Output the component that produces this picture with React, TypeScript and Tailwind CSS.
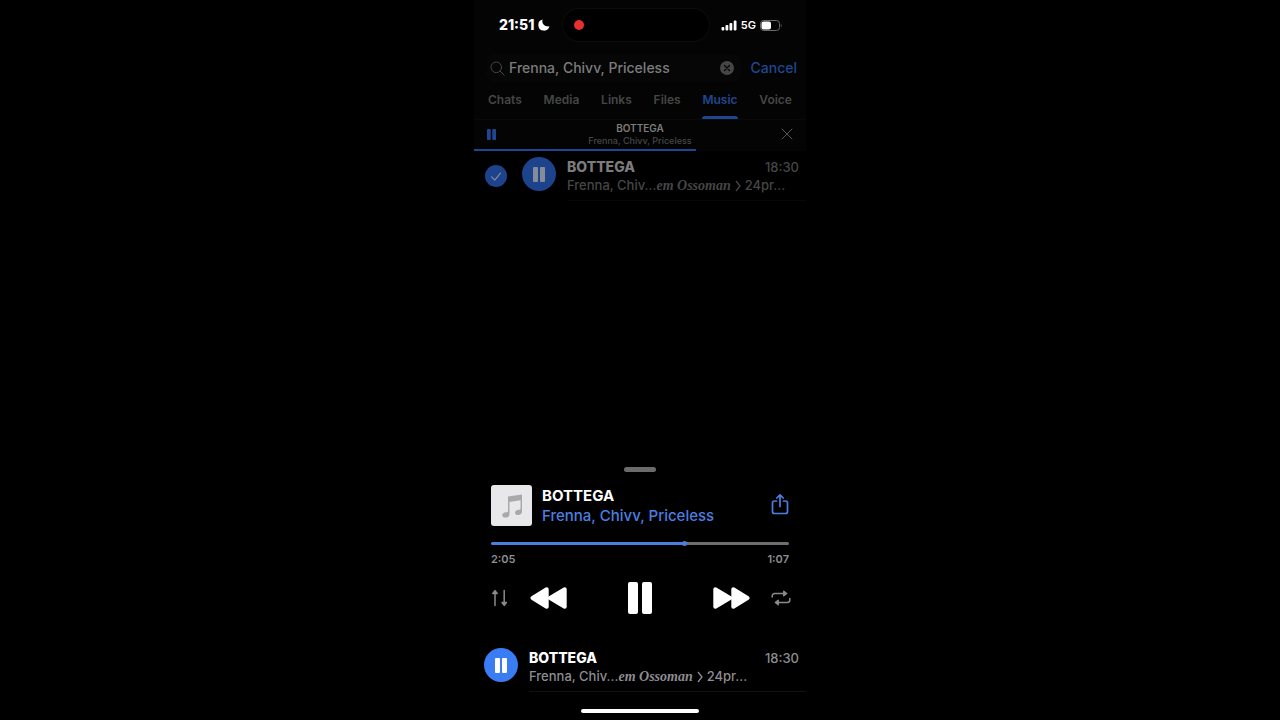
import React, { useState } from 'react';

const TABS = ['Chats', 'Media', 'Links', 'Files', 'Music', 'Voice'];

const TRACK = {
  title: 'BOTTEGA',
  artist: 'Frenna, Chivv, Priceless',
  time: '18:30',
};

const DURATION = 192;

function formatTime(seconds: number) {
  return `${Math.floor(seconds / 60)}:${String(seconds % 60).padStart(2, '0')}`;
}

function PauseIcon({ className }: { className?: string }) {
  return (
    <svg viewBox="0 0 24 32" preserveAspectRatio="none" className={className} fill="currentColor" aria-hidden="true">
      <rect x="0" y="0" width="10" height="32" rx="2" />
      <rect x="14" y="0" width="10" height="32" rx="2" />
    </svg>
  );
}

function SkipIcon({ className }: { className?: string }) {
  return (
    <svg viewBox="0 0 37 22" className={className} fill="currentColor" stroke="currentColor" strokeWidth="4" strokeLinejoin="round" aria-hidden="true">
      <path d="M2.300 2.300v17.400L17 11z" />
      <path d="M20.300 2.300v17.400L34.500 11z" />
    </svg>
  );
}

function TrackText({ dimmed }: { dimmed?: boolean }) {
  return (
    <div className={`min-w-0 flex-1 border-b pt-[7px] pr-[7px] pb-[6px] ${dimmed ? 'border-[#070707]' : 'border-[#111111]'}`}>
      <div className="flex items-center justify-between">
        <span className={`text-[14px] leading-[18px] font-extrabold ${dimmed ? 'text-[#7c7c7c]' : 'text-white'}`}>{TRACK.title}</span>
        <span className={`text-[13px] leading-[18px] font-medium ${dimmed ? 'text-[#464646]' : 'text-[#8d8d92]'}`}>{TRACK.time}</span>
      </div>
      <p className={`text-[13px] leading-[18px] font-medium whitespace-nowrap ${dimmed ? 'text-[#464646]' : 'text-[#8d8d92]'}`}>
        Frenna, Chiv...
        <span className="font-['Liberation_Serif',serif] text-[14px] leading-none font-bold italic">em Ossoman</span>
        <svg viewBox="0 0 6 12" className="mx-1 inline h-[12px] w-[6px] align-[-2px]" fill="none" stroke="currentColor" strokeWidth="1.300" aria-hidden="true">
          <path d="M1 1l4 5-4 5" />
        </svg>
        24pr...
      </p>
    </div>
  );
}

export default function App() {
  const [query, setQuery] = useState(TRACK.artist);
  const [tab, setTab] = useState('Music');
  const [position, setPosition] = useState(125);
  const percent = (position / DURATION) * 100;

  return (
    <div className="min-h-screen bg-black font-['Inter',sans-serif]">
      <main className="mx-auto flex min-h-screen w-full max-w-[332px] flex-col bg-black">
        <div className="bg-[#040404]">
          <header className="flex items-center justify-between pt-[9px] pr-6 pl-[25px] text-white">
            <div className="flex items-center gap-1">
              <span className="text-[14px] leading-[18px] font-extrabold">21:51</span>
              <svg viewBox="0 0 12 12" className="size-3" fill="currentColor" aria-hidden="true">
                <path d="M4.600.6C3.500 4 6 8 11.400 7.300A5.600 5.600 0 1 1 4.600.6z" />
              </svg>
            </div>
            <div className="flex h-8 w-[146px] items-center rounded-full bg-black pl-[11px] ring-1 ring-[#0d0d0d]">
              <span className="size-[10px] rounded-full bg-[#e8302f]" />
            </div>
            <div className="flex items-center gap-1">
              <svg viewBox="0 0 16 11" className="h-[11px] w-4" fill="currentColor" aria-hidden="true">
                <rect x="0.500" y="7" width="2.800" height="3.500" rx="1" />
                <rect x="4.500" y="5" width="2.800" height="5.500" rx="1" />
                <rect x="8.500" y="3" width="2.800" height="7.500" rx="1" />
                <rect x="12.700" y="0.500" width="2.800" height="10" rx="1" />
              </svg>
              <span className="text-[11px] leading-[18px] font-semibold">5G</span>
              <svg viewBox="0 0 22 11" className="h-[11px] w-[22px]" aria-hidden="true">
                <rect x="0.500" y="0.500" width="19" height="10" rx="3" fill="none" stroke="#6a6a6a" />
                <rect x="1.500" y="1.500" width="9.500" height="8" rx="2" fill="white" />
                <path d="M20.800 3.700v3.600c1-.4 1-3.200 0-3.600z" fill="#6a6a6a" />
              </svg>
            </div>
          </header>

          <form className="mt-[13px] flex items-center gap-[10px] pr-[9px] pl-3" onSubmit={(e) => e.preventDefault()}>
            <div className="flex h-7 min-w-0 flex-1 items-center gap-1 rounded-lg bg-[#060606] pr-[7px] pl-1">
              <svg viewBox="0 0 15 15" className="size-[15px] shrink-0 text-[#464646]" fill="none" stroke="currentColor" strokeLinecap="round" aria-hidden="true">
                <circle cx="6.300" cy="6.300" r="5.300" />
                <path d="M10.200 10.200l4 4" />
              </svg>
              <input
                aria-label="Search"
                value={query}
                onChange={(e) => setQuery(e.target.value)}
                className="min-w-0 flex-1 bg-transparent text-[14px] leading-[18px] font-medium text-[#7c7c7c] outline-none"
              />
              <button type="button" aria-label="Clear search" onClick={() => setQuery('')}>
                <svg viewBox="0 0 14 14" className="size-[14px]" aria-hidden="true">
                  <circle cx="7" cy="7" r="7" fill="#464646" />
                  <path d="M4.500 4.500l5 5M9.500 4.500l-5 5" stroke="#060606" strokeWidth="1.400" strokeLinecap="round" />
                </svg>
              </button>
            </div>
            <button type="button" className="text-[14px] leading-[18px] font-medium text-[#1f4791]">Cancel</button>
          </form>

          <nav className="mt-1 flex justify-between border-b border-[#0a0a0a] px-[14px]">
            {TABS.map((name) => (
              <button
                key={name}
                onClick={() => setTab(name)}
                className={`flex flex-col items-center justify-between pt-[5px] text-[12px] leading-[18px] font-semibold ${
                  tab === name ? 'text-[#1f4791]' : 'text-[#464646]'
                }`}
              >
                {name}
                <span className={`mt-[7px] h-[3px] w-full rounded-t-sm ${tab === name ? 'bg-[#1f4791]' : ''}`} />
              </button>
            ))}
          </nav>

          <section className="grid h-[29px] grid-cols-[20px_1fr_20px] items-center px-3 pb-[1px]">
            <button aria-label="Pause" className="pl-[1px] text-[#1f4791]">
              <PauseIcon className="h-[11px] w-[9px]" />
            </button>
            <div className="text-center">
              <p className="text-[10px] leading-[13px] font-semibold text-[#7c7c7c]">{TRACK.title}</p>
              <p className="text-[9px] leading-[11px] font-medium text-[#464646]">{TRACK.artist}</p>
            </div>
            <button aria-label="Close player" className="justify-self-end pr-[1px] text-[#565656]">
              <svg viewBox="0 0 12 12" className="size-3" fill="none" stroke="currentColor" strokeLinecap="round" aria-hidden="true">
                <path d="M1 1l10 10M11 1L1 11" />
              </svg>
            </button>
          </section>
          <div className="h-[2px]">
            <div className="h-full w-[67%] bg-[#1f4791]" />
          </div>
        </div>

        <section className="flex pl-[11px]">
          <label className="relative mt-[14px] mr-[15px] flex size-[22px] items-center justify-center">
            <input type="checkbox" defaultChecked aria-label="Select BOTTEGA" className="size-[22px] appearance-none rounded-full bg-[#1c438c]" />
            <svg viewBox="0 0 22 22" className="pointer-events-none absolute inset-0" fill="none" stroke="#858c99" strokeWidth="1.200" strokeLinecap="round" strokeLinejoin="round" aria-hidden="true">
              <path d="M6.700 11.800l3 3.300 5.800-7" />
            </svg>
          </label>
          <button aria-label="Pause BOTTEGA" className="mt-[6px] mr-[11px] flex size-[34px] items-center justify-center rounded-full bg-[#1c438c] text-[#858c99]">
            <PauseIcon className="h-[15px] w-[12px]" />
          </button>
          <TrackText dimmed />
        </section>

        <section className="mt-auto pt-4">
          <div className="mx-auto h-[5px] w-8 rounded-full bg-[#6b6b6b]" />

          <div className="mt-[13px] flex items-center px-[17px]">
            <div className="flex size-[41px] shrink-0 items-center justify-center rounded-[3px] bg-[#e8e7ea]">
              <svg viewBox="0 0 20 24" className="h-6 w-5" fill="#a9a9ab" aria-hidden="true">
                <path d="M6 2.600L20 .5v17.300c0 2-1.600 3.200-3.800 3.200-1.900 0-3.200-.9-3.200-2.300 0-1.600 1.500-2.700 3.600-2.900 1.300-.1 1.900-.4 1.900-1.300V6.300L7.500 8v12.200c0 2.100-1.600 3.400-4 3.400-1.900 0-3.200-.9-3.200-2.400 0-1.600 1.400-2.700 3.700-2.900 1.400-.1 2-.4 2-1.300z" />
              </svg>
            </div>
            <div className="ml-[10px] flex-1">
              <h1 className="text-[15px] leading-5 font-bold text-white">{TRACK.title}</h1>
              <p className="text-[15px] leading-5 font-medium text-[#4a7fe0]">{TRACK.artist}</p>
            </div>
            <button aria-label="Share" className="pb-1 text-[#4a7fe0]">
              <svg viewBox="0 0 18 22" className="h-[22px] w-[18px]" fill="none" stroke="currentColor" strokeWidth="1.700" strokeLinecap="round" strokeLinejoin="round" aria-hidden="true">
                <path d="M5.500 8H3.500A2 2 0 0 0 1.500 10v8.500a2 2 0 0 0 2 2h11a2 2 0 0 0 2-2V10a2 2 0 0 0-2-2h-2M9 13.500V2M5.800 5L9 1.800 12.200 5" />
              </svg>
            </button>
          </div>

          <div className="mt-4 px-[17px]">
            <input
              type="range"
              aria-label="Position"
              min={0}
              max={DURATION}
              value={position}
              onChange={(e) => setPosition(Number(e.target.value))}
              style={{ background: `linear-gradient(to right, #4a7fe0 ${percent}%, #6e6e6e ${percent}%)` }}
              className="block h-[3px] w-full appearance-none rounded-full [&::-webkit-slider-thumb]:size-[5px] [&::-webkit-slider-thumb]:appearance-none [&::-webkit-slider-thumb]:rounded-full [&::-webkit-slider-thumb]:bg-[#4a7fe0]"
            />
            <div className="mt-[7px] flex justify-between text-[11px] leading-[15px] font-semibold text-[#8d8d92]">
              <span>{formatTime(position)}</span>
              <span>{formatTime(DURATION - position)}</span>
            </div>
          </div>

          <div className="mt-[15px] flex items-center justify-between pr-[15px] pl-[17px]">
            <div className="flex items-center gap-[21px]">
              <button aria-label="Order" className="text-[#8a8a8e]">
                <svg viewBox="0 0 18 18" className="size-[18px]" fill="currentColor" stroke="currentColor" strokeWidth="1.500" strokeLinecap="round" strokeLinejoin="round" aria-hidden="true">
                  <path d="M4 16.500V2M1.800 4.500L4 1.600l2.200 2.900zM13.200 1.500V16M11 13.500l2.200 2.900 2.200-2.900z" />
                </svg>
              </button>
              <button aria-label="Previous" className="text-white">
                <SkipIcon className="h-[22px] w-[37px] rotate-180" />
              </button>
            </div>
            <button aria-label="Pause" className="text-white">
              <PauseIcon className="h-8 w-6" />
            </button>
            <div className="flex items-center gap-[21px]">
              <button aria-label="Next" className="text-white">
                <SkipIcon className="h-[22px] w-[37px]" />
              </button>
              <button aria-label="Repeat" className="text-[#8a8a8e]">
                <svg viewBox="0 0 20 18" className="h-[18px] w-5" fill="none" stroke="currentColor" strokeWidth="1.500" strokeLinecap="round" strokeLinejoin="round" aria-hidden="true">
                  <path d="M1.200 8V7a2.500 2.500 0 0 1 2.500-2.500H14M18.800 9.500v1.500a2.500 2.500 0 0 1-2.500 2.500H6" />
                  <path d="M12.800 2.300l2.800 2.200-2.800 2.200zM7.200 11.300l-2.800 2.200 2.800 2.200z" fill="currentColor" />
                </svg>
              </button>
            </div>
          </div>

          <div className="mt-7 flex pl-[10px]">
            <button aria-label="Pause BOTTEGA" className="mt-[6px] mr-[11px] flex size-[34px] items-center justify-center rounded-full bg-[#3a7cf3] text-white">
              <PauseIcon className="h-[15px] w-[12px]" />
            </button>
            <TrackText />
          </div>

          <div className="mx-auto mt-[17px] mb-[7px] h-1 w-[118px] rounded-full bg-white" />
        </section>
      </main>
    </div>
  );
}
